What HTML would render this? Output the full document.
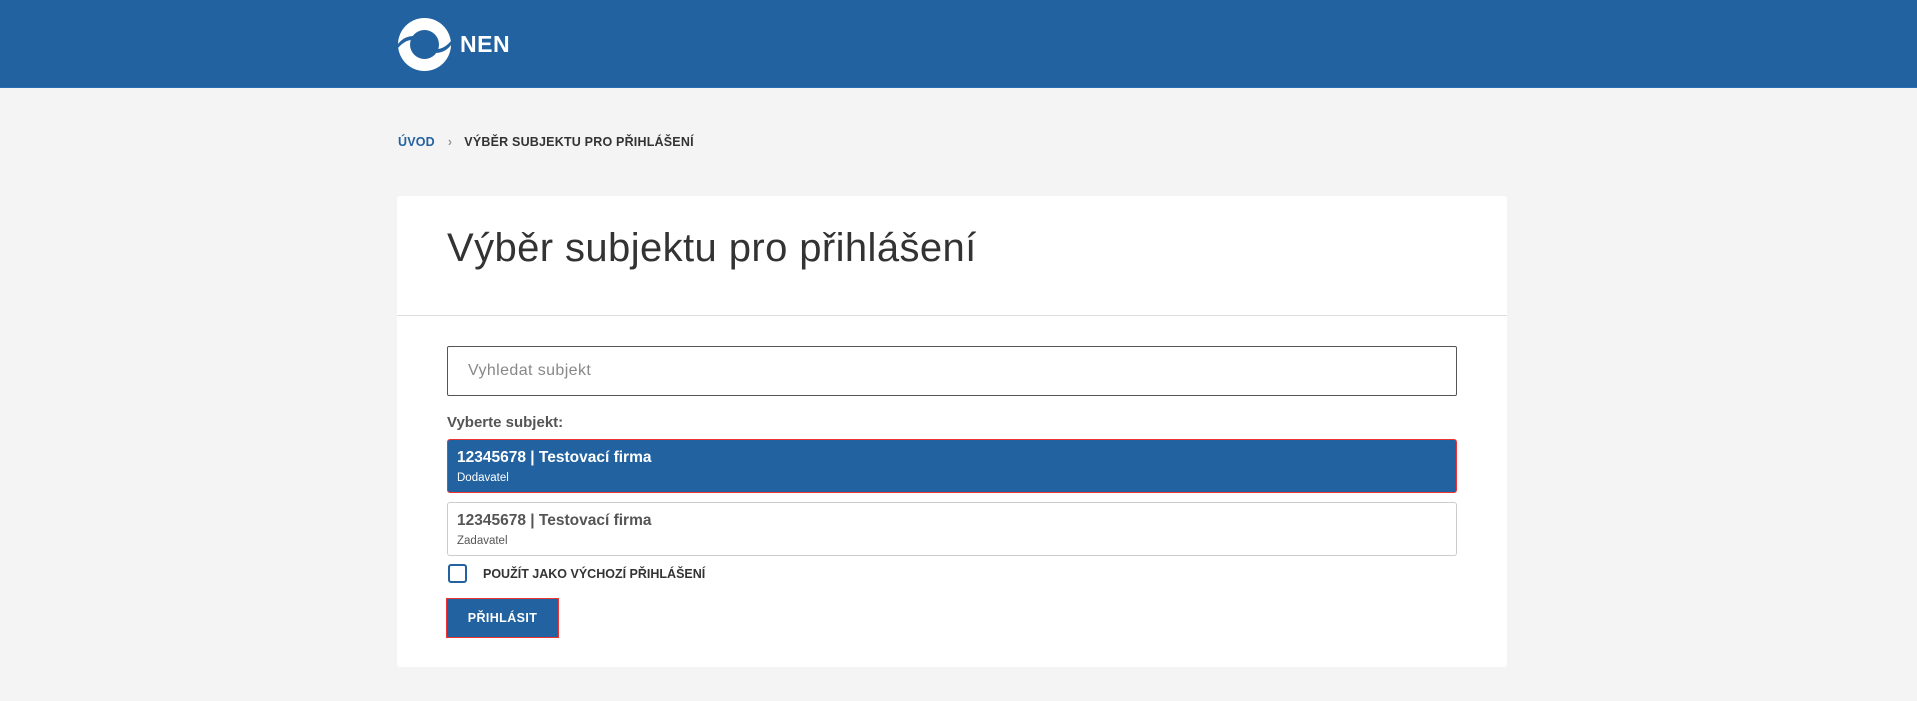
<!DOCTYPE html>
<html><head><meta charset="utf-8"><style>
*{box-sizing:border-box;margin:0;padding:0}
body{width:1917px;height:701px;background:#f4f4f4;font-family:"Liberation Sans",Arial,sans-serif;position:relative;overflow:hidden}
.hdr{position:absolute;left:0;top:0;width:1917px;height:88px;background:#2262a1;border-bottom:1px solid #2a6fb5}
.nen{position:absolute;left:460px;top:31px;color:#fff;font-weight:bold;font-size:23px;letter-spacing:0.5px}
.bc{position:absolute;left:398px;top:135px;font-size:12.5px;font-weight:bold;color:#333;letter-spacing:0.2px}
.bc .u{color:#2262a1}.bc .s{color:#999;margin:0 12px 0 13px}
.card{position:absolute;left:397px;top:196px;width:1110px;height:471px;background:#fff;border-radius:3px}
h1{position:absolute;left:50px;top:30px;font-size:40px;font-weight:normal;color:#333;letter-spacing:0.4px}
.div{position:absolute;left:0;top:119px;width:100%;height:1px;background:#ddd}
.inp{position:absolute;left:50px;top:150px;width:1010px;height:50px;border:1px solid #555;border-radius:2px;font-size:16px;color:#888;padding:15px 20px;letter-spacing:0.4px}
.lbl{position:absolute;left:50px;top:218px;font-size:15px;font-weight:bold;color:#555}
.opt{position:absolute;left:50px;width:1010px;height:54px;border-radius:3px;padding:9px 9px}
.opt b{display:block;font-size:15.5px}
.opt span{display:block;font-size:11.5px;margin-top:5px}
.o1{top:243px;background:#2262a1;color:#fff;border:1px solid #e33}
.o2{top:306px;border:1px solid #ccc;color:#555}
.cb{position:absolute;left:51px;top:368px;width:19px;height:19px;border:2px solid #2262a1;border-radius:3px}
.cbl{position:absolute;left:86px;top:371px;font-size:12.5px;font-weight:bold;color:#333}
.btn{position:absolute;left:49px;top:402px;width:113px;height:40px;background:#2262a1;border:1px solid #e33;color:#fff;font-size:12.5px;font-weight:bold;text-align:center;line-height:38px;letter-spacing:0.4px}
</style></head><body>
<div class="hdr">
<svg style="position:absolute;left:398px;top:18px" width="53" height="53" viewBox="0 0 53 53">
<circle cx="26.5" cy="26.5" r="26.5" fill="#fff"/>
<circle cx="26.5" cy="26.5" r="14.5" fill="#2262a1"/>
<path d="M0 26 Q6 18 16 18 L14 22 Q7 22 0 30Z" fill="#2262a1"/>
<path d="M53 27 Q47 35 37 35 L39 31 Q46 31 53 23Z" fill="#2262a1"/>
</svg>
<div class="nen">NEN</div>
</div>
<div class="bc"><span class="u">ÚVOD</span><span class="s">›</span>VÝBĚR SUBJEKTU PRO PŘIHLÁŠENÍ</div>
<div class="card">
<h1>Výběr subjektu pro přihlášení</h1>
<div class="div"></div>
<div class="inp">Vyhledat subjekt</div>
<div class="lbl">Vyberte subjekt:</div>
<div class="opt o1"><b>12345678 | Testovací firma</b><span>Dodavatel</span></div>
<div class="opt o2"><b>12345678 | Testovací firma</b><span>Zadavatel</span></div>
<div class="cb"></div>
<div class="cbl">POUŽÍT JAKO VÝCHOZÍ PŘIHLÁŠENÍ</div>
<div class="btn">PŘIHLÁSIT</div>
</div>
</body></html>
